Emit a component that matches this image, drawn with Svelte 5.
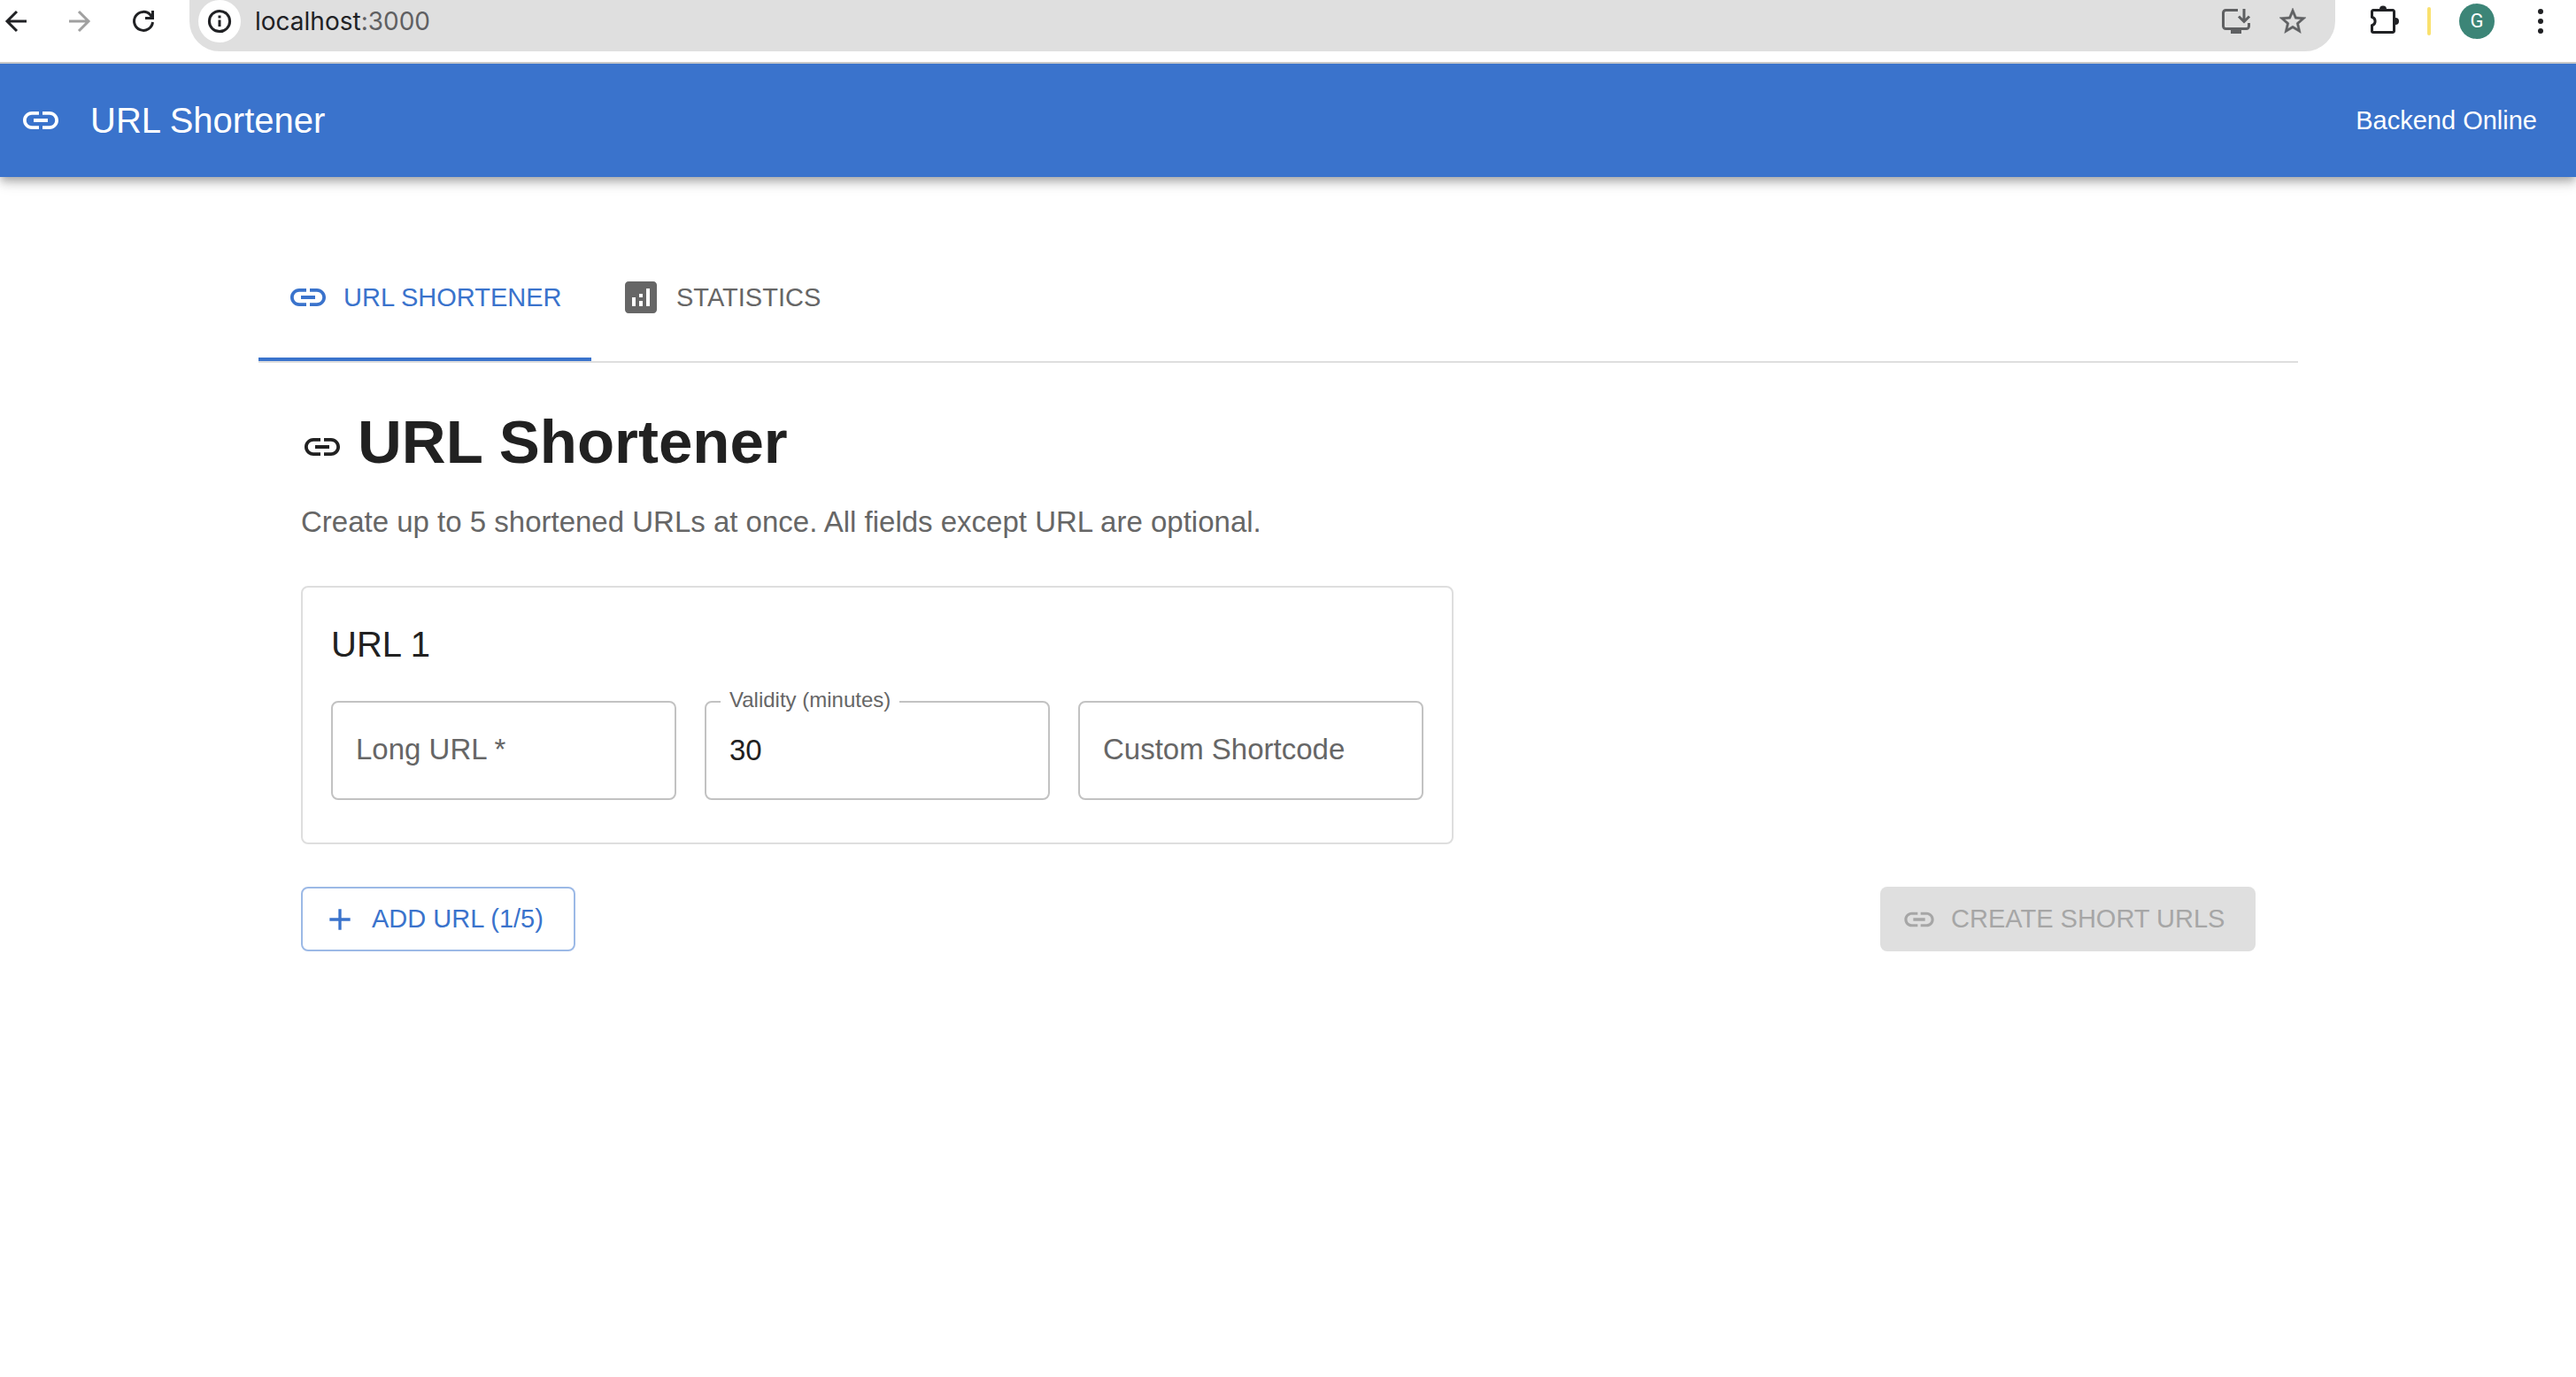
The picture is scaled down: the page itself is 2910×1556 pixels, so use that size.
<script>
  let tab = $state('shorten');
  let entries = $state([{ url: '', validity: '30', code: '' }]);
  const limit = 5;
  let ready = $derived(entries.every((entry) => entry.url.trim() !== ''));

  function addEntry() {
    if (entries.length < limit) entries.push({ url: '', validity: '30', code: '' });
  }
</script>

{#snippet linkIcon(size)}
  <svg class={size} viewBox="0 0 24 24" aria-hidden="true">
    <path d="M3.9 12c0-1.71 1.39-3.1 3.1-3.1h4V7H7c-2.76 0-5 2.24-5 5s2.24 5 5 5h4v-1.9H7c-1.71 0-3.1-1.39-3.1-3.1M8 13h8v-2H8zm9-6h-4v1.9h4c1.71 0 3.1 1.39 3.1 3.1s-1.39 3.1-3.1 3.1h-4V17h4c2.76 0 5-2.24 5-5s-2.24-5-5-5" />
  </svg>
{/snippet}

<div class="browser">
  <div class="nav">
    <button class="tool" aria-label="Back">
      <svg class="stroke" viewBox="0 0 24 24"><path d="M24 12H2M13 1 2 12l11 11" /></svg>
    </button>
    <button class="tool faded" aria-label="Forward" disabled>
      <svg class="stroke" viewBox="0 0 24 24"><path d="M0 12h22M11 1l11 11-11 11" /></svg>
    </button>
    <button class="tool" aria-label="Reload">
      <svg class="stroke" viewBox="0 0 24 24"><path d="M22.5 13A10.5 10.5 0 1 1 20 5l2 3M22.5 0v8.500H14" /></svg>
    </button>
  </div>
  <div class="omnibox">
    <button class="info" aria-label="Site information">
      <svg viewBox="0 0 26 26"><circle cx="13" cy="13" r="11.6" /><path d="M13 11.500v7.500M13 6.500v3" /></svg>
    </button>
    <span class="address">localhost<span class="port">:3000</span></span>
    <button class="tool muted" aria-label="Install app">
      <svg class="wide" viewBox="0 0 32 32"><path d="M18 3.500H4.500a3 3 0 0 0-3 3V21.500a3 3 0 0 0 3 3h23a3 3 0 0 0 3-3v-3.500M25 2v14M19 10.500l6 6 6-6" /><path class="solid" d="M10 25h12v5H10z" /></svg>
    </button>
    <button class="tool muted" aria-label="Bookmark">
      <svg class="star" viewBox="0 0 24 24"><path d="m22 9.240-7.190-.62L12 2 9.190 8.630 2 9.240l5.460 4.730L5.820 21 12 17.270 18.180 21l-1.630-7.030zM12 15.400l-3.760 2.270 1-4.280-3.320-2.880 4.380-.38L12 6.100l1.710 4.040 4.380.38-3.320 2.880 1 4.280z" /></svg>
    </button>
  </div>
  <div class="actions">
    <button class="tool" aria-label="Extensions">
      <svg class="wide" viewBox="0 0 32 32"><path d="M3 3.500h22a1.500 1.500 0 0 1 1.500 1.500v22a1.500 1.500 0 0 1-1.500 1.500H3A1.500 1.500 0 0 1 1.500 27v-6.200a5 5 0 0 0 0-9.600V5A1.500 1.500 0 0 1 3 3.500z" /><path class="solid" d="M10 2.500a4 4 0 0 1 8 0zM28 12a4 4 0 0 1 0 8z" /></svg>
    </button>
    <span class="rule"></span>
    <button class="avatar" aria-label="Profile">G</button>
    <button class="tool more" aria-label="Menu">
      <svg class="dots" viewBox="0 0 8 32"><circle cx="4" cy="5" r="3" /><circle cx="4" cy="16" r="3" /><circle cx="4" cy="27" r="3" /></svg>
    </button>
  </div>
</div>

<header class="appbar">
  {@render linkIcon('icon')}
  <div class="brand">URL Shortener</div>
  <div class="status">Backend Online</div>
</header>

<main>
  <div class="tabs" role="tablist">
    <button class="tab" role="tab" aria-selected={tab === 'shorten'} onclick={() => (tab = 'shorten')}>
      {@render linkIcon('icon')}
      URL SHORTENER
    </button>
    <button class="tab" role="tab" aria-selected={tab === 'stats'} onclick={() => (tab = 'stats')}>
      <svg class="icon" viewBox="0 0 24 24" aria-hidden="true">
        <path d="M19 3H5c-1.100 0-2 .9-2 2v14c0 1.100.9 2 2 2h14c1.100 0 2-.9 2-2V5c0-1.100-.9-2-2-2M9 17H7v-5h2zm4 0h-2v-3h2zm0-5h-2v-2h2zm4 5h-2V7h2z" />
      </svg>
      STATISTICS
    </button>
  </div>

  <section class="panel">
    <h1>{@render linkIcon('icon')}URL Shortener</h1>
    <p>Create up to 5 shortened URLs at once. All fields except URL are optional.</p>

    {#each entries as entry, i}
      <div class="card">
        <h2>URL {i + 1}</h2>
        <div class="fields">
          <div class="field">
            <input id="url-{i}" type="text" bind:value={entry.url} />
            <label for="url-{i}" class:raised={entry.url}>Long URL *</label>
          </div>
          <div class="field">
            <input id="validity-{i}" type="text" inputmode="numeric" bind:value={entry.validity} />
            <label for="validity-{i}" class:raised={entry.validity}>Validity (minutes)</label>
          </div>
          <div class="field">
            <input id="code-{i}" type="text" bind:value={entry.code} />
            <label for="code-{i}" class:raised={entry.code}>Custom Shortcode</label>
          </div>
        </div>
      </div>
    {/each}

    <div class="buttons">
      <button class="btn outlined" onclick={addEntry}>
        <svg class="small" viewBox="0 0 24 24" aria-hidden="true"><path d="M19 13h-6v6h-2v-6H5v-2h6V5h2v6h6z" /></svg>
        ADD URL ({entries.length}/{limit})
      </button>
      <button class="btn contained" disabled={!ready}>
        {@render linkIcon('small')}
        CREATE SHORT URLS
      </button>
    </div>
  </section>
</main>

<style>
  :global(body) {
    margin: 0;
    background: #fff;
    color: #212121;
    font-family: "Liberation Sans", Helvetica, Arial, sans-serif;
  }

  button {
    display: flex;
    align-items: center;
    box-sizing: border-box;
    margin: 0;
    padding: 0;
    border: 0;
    background: none;
    color: inherit;
    font: inherit;
    cursor: pointer;
  }

  svg {
    display: block;
    flex: none;
    overflow: visible;
    fill: currentColor;
  }

  .icon {
    width: 48px;
    height: 48px;
  }

  .small {
    width: 40px;
    height: 40px;
  }

  .browser {
    position: relative;
    z-index: 2;
    display: flex;
    align-items: flex-start;
    height: 70px;
    overflow: hidden;
    border-bottom: 2px solid #c8c8c8;
    background: #fff;
    color: #202124;
  }

  .nav,
  .actions {
    display: flex;
    align-items: center;
    height: 48px;
  }

  .nav {
    gap: 48px;
    padding: 0 40px 0 6px;
  }

  .actions {
    gap: 32px;
    padding: 0 36px 0 40px;
  }

  .more {
    margin-left: 16px;
  }

  .stroke,
  .wide {
    fill: none;
    stroke: currentColor;
    stroke-width: 3;
  }

  .stroke {
    width: 24px;
    height: 24px;
  }

  .wide {
    width: 32px;
    height: 32px;
  }

  .star {
    width: 36px;
    height: 36px;
    stroke: currentColor;
    stroke-width: 0.3;
  }

  .solid {
    fill: currentColor;
    stroke: none;
  }

  .dots {
    width: 8px;
    height: 32px;
  }

  .faded {
    color: #a0a0a0;
  }

  .muted {
    color: #5f6062;
  }

  .omnibox {
    display: flex;
    flex: 1;
    align-items: center;
    gap: 30px;
    height: 48px;
    padding: 0 30px 10px 10px;
    border-radius: 0 0 34px 34px;
    background: #dfdfdf;
  }

  .info {
    justify-content: center;
    width: 48px;
    height: 48px;
    border-radius: 50%;
    background: #fff;
  }

  .info svg {
    width: 26px;
    height: 26px;
    fill: none;
    stroke: currentColor;
    stroke-width: 3;
  }

  .address {
    flex: 1;
    margin-left: -14px;
    font: 28px/48px Inter, sans-serif;
  }

  .port {
    color: #5f6062;
  }

  .rule {
    width: 4px;
    height: 32px;
    border-radius: 2px;
    background: #fae16e;
  }

  .avatar {
    justify-content: center;
    width: 40px;
    height: 40px;
    border-radius: 50%;
    background: #3c8577;
    color: #fff;
    font: 22px/40px Roboto, sans-serif;
  }

  .appbar {
    position: relative;
    display: flex;
    align-items: center;
    height: 128px;
    padding: 0 44px 0 22px;
    background: #3a73cc;
    color: #fff;
    box-shadow:
      0 4px 8px -2px rgba(0, 0, 0, 0.2),
      0 8px 10px 0 rgba(0, 0, 0, 0.14),
      0 2px 20px 0 rgba(0, 0, 0, 0.12);
  }

  .brand {
    flex: 1;
    margin-left: 32px;
    font-size: 40px;
    line-height: 64px;
  }

  .status {
    font-size: 29px;
    line-height: 40px;
  }

  main {
    max-width: 2304px;
    margin: 0 auto;
    padding: 64px 22px 64px 0;
  }

  .tabs {
    display: flex;
    border-bottom: 2px solid #dedede;
  }

  .tab {
    gap: 16px;
    height: 144px;
    min-width: 376px;
    padding: 0 32px;
    color: #666;
    font-size: 29px;
  }

  .tab[aria-selected="true"] {
    color: #3a73cc;
    box-shadow: inset 0 -4px #3a73cc;
  }

  .panel {
    padding: 48px;
  }

  h1 {
    margin: 0 0 24px;
    font-size: 69px;
    line-height: 84px;
  }

  h1 .icon,
  h1 :global(.icon) {
    display: inline-block;
    margin-right: 16px;
    vertical-align: middle;
  }

  p {
    margin: 0 0 48px;
    color: #666;
    font-size: 33px;
    line-height: 48px;
  }

  .card {
    box-sizing: border-box;
    max-width: 1302px;
    margin-bottom: 48px;
    padding: 32px 32px 48px;
    border: 2px solid #dedede;
    border-radius: 8px;
  }

  h2 {
    margin: 0 0 32px;
    font-size: 40px;
    font-weight: 400;
    line-height: 64px;
  }

  .fields {
    display: grid;
    grid-template-columns: repeat(3, 1fr);
    gap: 32px;
  }

  .field {
    position: relative;
  }

  input {
    box-sizing: border-box;
    display: block;
    width: 100%;
    height: 112px;
    padding: 0 26px;
    border: 2px solid #c2c2c2;
    border-radius: 8px;
    background: none;
    color: #212121;
    font: inherit;
    font-size: 33px;
  }

  label {
    position: absolute;
    top: 32px;
    left: 28px;
    color: #666;
    font-size: 33px;
    line-height: 46px;
    pointer-events: none;
  }

  label.raised {
    top: -24px;
    left: 18px;
    padding: 0 10px;
    background: #fff;
    font-size: 24px;
  }

  .buttons {
    display: flex;
    justify-content: space-between;
  }

  .btn {
    gap: 16px;
    height: 73px;
    border-radius: 8px;
    font-size: 29px;
  }

  .outlined {
    min-width: 310px;
    padding: 0 32px 0 22px;
    border: 2px solid #9cb9e6;
    color: #3a73cc;
  }

  .contained {
    min-width: 424px;
    padding: 0 32px 0 24px;
    background: #3a73cc;
    color: #fff;
  }

  .contained:disabled {
    background: #dfdfdf;
    color: #a6a6a6;
  }
</style>
